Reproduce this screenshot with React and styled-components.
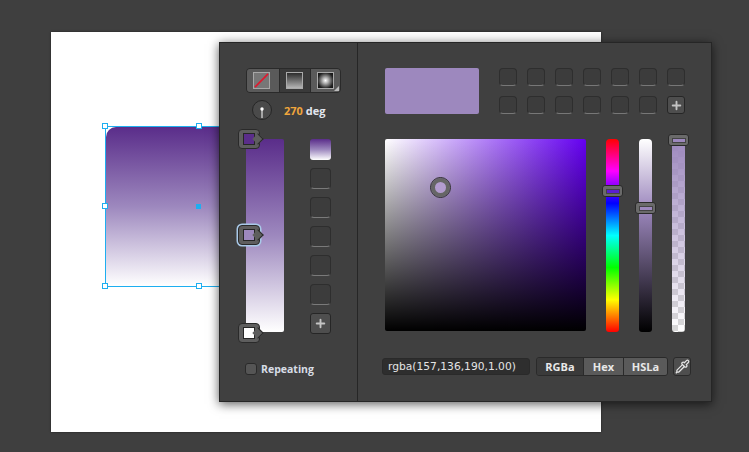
import React from 'react'
import styled, { createGlobalStyle } from 'styled-components'
import { Plus, Pipette } from 'lucide-react'

const Global = createGlobalStyle`
    html, body {
        margin: 0;
        padding: 0;
        height: 452px;
        overflow: hidden;
        background: #3f3f3f;
        font-family: "Open Sans", "DejaVu Sans", sans-serif;
    }
`

const HUE = 'linear-gradient(#f00 0%, #f0f 16.6%, #00f 33.3%, #0ff 50%, #0f0 66.6%, #ff0 83.3%, #f00 100%)'
const GRADIENT = 'linear-gradient(#5a2d8a 0%, #9d88be 50%, #fff 100%)'
const SHADE = 'linear-gradient(#fff 0%, #9d88be 36%, #000 100%)'
const CHECKER = 'repeating-conic-gradient(#d8d8d8 0% 25%, #fff 0% 50%) 0 0 / 12px 12px'
const ALPHA = `linear-gradient(#9d88be, rgba(157,136,190,0)), ${CHECKER}`

const SLOT_COUNT = 5

const App = () => {
    return (
        <Page>
            <Global />
            <Artboard>
                <Shape />
                <Outline>
                    <Handle $x={0} $y={0} />
                    <Handle $x={50} $y={0} />
                    <Handle $x={100} $y={0} />
                    <Handle $x={0} $y={50} />
                    <Handle $x={100} $y={50} />
                    <Handle $x={0} $y={100} />
                    <Handle $x={50} $y={100} />
                    <Handle $x={100} $y={100} />
                    <CenterDot />
                </Outline>
            </Artboard>

            <Popup>
                <LeftPane>
                    <ModeGroup>
                        <ModeButton $active>
                            <NoneIcon viewBox="0 0 16 16">
                                <line x1="1" y1="15" x2="15" y2="1" stroke="#e0182e" strokeWidth="1.7" />
                            </NoneIcon>
                        </ModeButton>
                        <ModeButton>
                            <ModeSwatch $bg="linear-gradient(#2c2c2c, #b5b5b5)" />
                        </ModeButton>
                        <ModeButton $active $corner>
                            <ModeSwatch $bg="radial-gradient(circle at 50% 50%, #fff 0%, #aaa 30%, #222 75%, #111 100%)" />
                        </ModeButton>
                    </ModeGroup>

                    <AngleRow>
                        <Knob>
                            <svg width="18" height="18" viewBox="0 0 18 18">
                                <line x1="9" y1="8" x2="9" y2="17" stroke="#fff" strokeWidth="1" />
                                <circle cx="9" cy="8" r="1.7" fill="#fff" />
                            </svg>
                        </Knob>
                        <AngleText><b>270</b> deg</AngleText>
                    </AngleRow>

                    <GradientRow>
                        <GradientBar>
                            <Stop $top={-10} $color="#5a2d8a" />
                            <Stop $top={86} $color="#9d88be" $selected />
                            <Stop $top={184} $color="#fff" />
                        </GradientBar>
                        <SlotColumn>
                            <GradientSlot />
                            {Array.from({ length: SLOT_COUNT }).map((_, i) => <EmptySlot key={i} />)}
                            <AddButton><Plus size={13} strokeWidth={3.5} color="#c4c4c4" /></AddButton>
                        </SlotColumn>
                    </GradientRow>

                    <RepeatRow>
                        <Checkbox />
                        <RepeatLabel>Repeating</RepeatLabel>
                    </RepeatRow>
                </LeftPane>

                <RightPane>
                    <TopRow>
                        <Preview />
                        <SwatchGrid>
                            {Array.from({ length: 13 }).map((_, i) => <Swatch key={i} />)}
                            <SwatchAdd><Plus size={13} strokeWidth={3.5} color="#c4c4c4" /></SwatchAdd>
                        </SwatchGrid>
                    </TopRow>

                    <PickerRow>
                        <Square>
                            <Cursor />
                        </Square>
                        <Slider $bg={HUE}>
                            <Thumb $top={46} $color="#5a1fd0" />
                        </Slider>
                        <Slider $bg={SHADE}>
                            <Thumb $top={63} $color="#9d88be" />
                        </Slider>
                        <Slider $bg={ALPHA}>
                            <Thumb $top={-5} $color="#9d88be" />
                        </Slider>
                    </PickerRow>

                    <BottomRow>
                        <ValueField>rgba(157,136,190,1.00)</ValueField>
                        <FormatGroup>
                            <FormatButton $w={46}>RGBa</FormatButton>
                            <FormatButton $w={40} $light>Hex</FormatButton>
                            <FormatButton $w={44} $light>HSLa</FormatButton>
                        </FormatGroup>
                        <DropperButton><Pipette size={15} color="#e4e4e4" /></DropperButton>
                    </BottomRow>
                </RightPane>
            </Popup>
        </Page>
    )
}

export default App

const Page = styled.div`
    position: relative;
    width: 749px;
    height: 452px;
    padding: 32px 0 0 51px;
    box-sizing: border-box;
    background: #3f3f3f;
`
const Artboard = styled.div`
    position: relative;
    width: 550px;
    height: 400px;
    background: #fff;
    box-shadow: 0 0 2px rgba(0, 0, 0, 0.5);
`
const Shape = styled.div`
    position: absolute;
    left: 55px;
    top: 95px;
    width: 187px;
    height: 159px;
    border-radius: 10px 0 0 0;
    background: linear-gradient(#5a2d8a 0%, #9d88be 50%, #fff 100%);
`
const Outline = styled.div`
    position: absolute;
    left: 54px;
    top: 94px;
    width: 188px;
    height: 160px;
    &::before {
        content: '';
        position: absolute;
        inset: 0 -1px -1px 0;
        border: 1px solid #1eaef0;
    }
`
const Handle = styled.span`
    position: absolute;
    left: ${p => p.$x}%;
    top: ${p => p.$y}%;
    width: 4px;
    height: 4px;
    margin: -3px 0 0 -3px;
    border: 1px solid #1eaef0;
    background: #fff;
`
const CenterDot = styled.span`
    position: absolute;
    left: 50%;
    top: 50%;
    width: 5px;
    height: 5px;
    margin: -2px 0 0 -3px;
    background: #1eaef0;
`
const Popup = styled.div`
    position: absolute;
    left: 219px;
    top: 42px;
    width: 493px;
    height: 360px;
    display: flex;
    box-sizing: border-box;
    background: #404040;
    border: 1px solid #262626;
    box-shadow: 0 2px 10px rgba(0, 0, 0, 0.65);
`
const LeftPane = styled.div`
    width: 138px;
    flex: none;
    box-sizing: border-box;
    padding: 25px 0 0 26px;
    border-right: 1px solid #262626;
    display: flex;
    flex-direction: column;
`
const ModeGroup = styled.div`
    display: flex;
    width: 95px;
    height: 25px;
    border-radius: 4px;
    overflow: hidden;
    border: 1px solid #2a2a2a;
    box-sizing: border-box;
    background: #333;
`
const ModeButton = styled.div`
    position: relative;
    flex: 1;
    display: flex;
    align-items: center;
    justify-content: center;
    background: ${p => (p.$active ? '#5a5a5a' : '#3a3a3a')};
    & + & {
        border-left: 1px solid #2a2a2a;
    }
    &:first-child {
        padding-right: 3px;
    }
    ${p => p.$corner && `
        &::after {
            content: '';
            position: absolute;
            right: 1px;
            bottom: 1px;
            border-style: solid;
            border-width: 0 0 5px 5px;
            border-color: transparent transparent #bbb transparent;
        }
    `}
`
const NoneIcon = styled.svg`
    width: 17px;
    height: 17px;
    box-sizing: border-box;
    border: 1px solid #a8a8a8;
    background: #777;
`
const ModeSwatch = styled.div`
    width: 17px;
    height: 17px;
    box-sizing: border-box;
    border: 1px solid #aaa;
    background: ${p => p.$bg};
`
const AngleRow = styled.div`
    display: flex;
    align-items: center;
    gap: 12px;
    height: 20px;
    margin: 7px 0 0 6px;
`
const Knob = styled.div`
    width: 20px;
    height: 20px;
    border-radius: 50%;
    box-sizing: border-box;
    background: #4a4a4a;
    border: 1px solid #262626;
`
const AngleText = styled.div`
    font-size: 11px;
    font-weight: 700;
    color: #e2e6ee;
    b {
        color: #f0a63c;
        font-weight: 700;
    }
`
const GradientRow = styled.div`
    display: flex;
    gap: 26px;
    margin-top: 19px;
`
const GradientBar = styled.div`
    position: relative;
    width: 38px;
    height: 193px;
    border-radius: 2px;
    background: ${GRADIENT};
`
const Stop = styled.div`
    position: absolute;
    left: -8px;
    top: ${p => p.$top}px;
    width: 22px;
    height: 20px;
    box-sizing: border-box;
    display: flex;
    align-items: center;
    justify-content: center;
    border-radius: 4px;
    background: #5e5e5e;
    border: 1px solid #2a2a2a;
    box-shadow: ${p => (p.$selected ? '0 0 0 1.5px #a9c9e8' : 'none')};
    &::before {
        content: '';
        width: 12px;
        height: 12px;
        box-sizing: border-box;
        border: 1px solid #262626;
        background: ${p => p.$color};
    }
    &::after {
        content: '';
        position: absolute;
        right: -3px;
        top: 5px;
        width: 8px;
        height: 8px;
        box-sizing: border-box;
        background: #5e5e5e;
        border-top: 1px solid #2a2a2a;
        border-right: 1px solid #2a2a2a;
        transform: rotate(45deg);
    }
`
const SlotColumn = styled.div`
    display: flex;
    flex-direction: column;
    gap: 8px;
`
const GradientSlot = styled.div`
    width: 21px;
    height: 21px;
    border-radius: 3px;
    background: ${GRADIENT};
`
const EmptySlot = styled.div`
    width: 21px;
    height: 21px;
    box-sizing: border-box;
    border-radius: 4px;
    background: #3c3c3c;
    border: 1px solid #2e2e2e;
    border-bottom-color: #7a7a7a;
`
const AddButton = styled.div`
    width: 21px;
    height: 21px;
    box-sizing: border-box;
    border-radius: 3px;
    background: #4e4e4e;
    border: 1px solid #262626;
    display: flex;
    align-items: center;
    justify-content: center;
`
const RepeatRow = styled.div`
    display: flex;
    align-items: center;
    gap: 4px;
    margin: 28px 0 0 -1px;
`
const Checkbox = styled.div`
    width: 12px;
    height: 12px;
    box-sizing: border-box;
    border-radius: 3px;
    background: #555;
    border: 1px solid #2a2a2a;
`
const RepeatLabel = styled.span`
    font-size: 10.5px;
    font-weight: 700;
    color: #d8dde6;
`
const RightPane = styled.div`
    flex: 1;
    box-sizing: border-box;
    padding: 25px 0 0 27px;
    display: flex;
    flex-direction: column;
`
const TopRow = styled.div`
    display: flex;
    gap: 20px;
`
const Preview = styled.div`
    width: 94px;
    height: 46px;
    border-radius: 2px;
    background: #9d88be;
`
const SwatchGrid = styled.div`
    display: grid;
    grid-template-columns: repeat(7, 18px);
    grid-auto-rows: 18px;
    column-gap: 10px;
    row-gap: 10px;
`
const Swatch = styled.div`
    box-sizing: border-box;
    border-radius: 4px;
    background: #3c3c3c;
    border: 1px solid #2e2e2e;
    border-bottom-color: #777;
`
const SwatchAdd = styled.div`
    box-sizing: border-box;
    border-radius: 3px;
    background: #4e4e4e;
    border: 1px solid #262626;
    display: flex;
    align-items: center;
    justify-content: center;
`
const PickerRow = styled.div`
    display: flex;
    margin-top: 25px;
    height: 193px;
`
const Square = styled.div`
    position: relative;
    width: 201px;
    height: 192px;
    margin-right: 20px;
    border-radius: 2px;
    background: linear-gradient(rgba(0, 0, 0, 0), #000), linear-gradient(90deg, #fff, #6400f0);
`
const Cursor = styled.div`
    position: absolute;
    left: 45px;
    top: 38px;
    width: 21px;
    height: 21px;
    box-sizing: border-box;
    border-radius: 50%;
    border: 1px solid #2a2a2a;
    box-shadow: inset 0 0 0 4px #666;
    background: #b39ccf;
`
const Slider = styled.div`
    position: relative;
    width: 13px;
    margin-right: 20px;
    border-radius: 4px 4px 3px 3px;
    background: ${p => p.$bg};
`
const Thumb = styled.div`
    position: absolute;
    left: -4px;
    top: ${p => p.$top}px;
    width: 21px;
    height: 12px;
    box-sizing: border-box;
    border-radius: 3px;
    background: #6a6a6a;
    border: 1px solid #2a2a2a;
    display: flex;
    align-items: center;
    justify-content: center;
    &::before {
        content: '';
        width: 12px;
        height: 3px;
        background: ${p => p.$color};
        border: 1px solid #444;
    }
`
const BottomRow = styled.div`
    display: flex;
    align-items: flex-start;
    margin: 25px 0 0 -3px;
`
const ValueField = styled.div`
    width: 148px;
    height: 17px;
    margin-top: 1px;
    box-sizing: border-box;
    border-radius: 3px;
    padding-left: 5px;
    background: #2e2e2e;
    border: 1px solid #2a2a2a;
    color: #e4e4e4;
    font-family: "DejaVu Sans", sans-serif;
    font-size: 10.7px;
    line-height: 15px;
`
const FormatGroup = styled.div`
    display: flex;
    margin-left: 6px;
    height: 19px;
    box-sizing: border-box;
    border-radius: 3px;
    overflow: hidden;
    border: 1px solid #2a2a2a;
`
const FormatButton = styled.div`
    width: ${p => p.$w}px;
    box-sizing: border-box;
    font-size: 11px;
    font-weight: 700;
    line-height: 17px;
    text-align: center;
    color: #e8e8e8;
    background: ${p => (p.$light ? '#5a5a5a' : '#3a3a3a')};
    & + & {
        border-left: 1px solid #2a2a2a;
    }
`
const DropperButton = styled.div`
    width: 18px;
    height: 19px;
    margin-left: 5px;
    box-sizing: border-box;
    border-radius: 3px;
    background: #4e4e4e;
    border: 1px solid #2a2a2a;
    display: flex;
    align-items: center;
    justify-content: center;
`
